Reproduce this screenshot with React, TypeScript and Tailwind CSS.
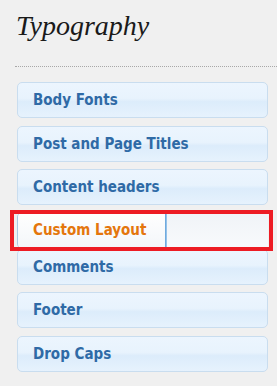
const items = ["Body Fonts", "Post and Page Titles", "Content headers"];
const after = ["Comments", "Footer", "Drop Caps"];

const Item = ({ label, className = "" }: { label: string; className?: string }) => (
  <div
    className={`flex h-[36px] items-center rounded-[5px] border border-[#c9ddef] bg-[linear-gradient(to_bottom,#ecf5fe_0%,#e8f3fd_45%,#dcecfb_55%,#e6f2fd_100%)] pl-[15px] text-[15px] font-bold text-[#2f6aa6] ${className}`}
  >
    {label}
  </div>
);

export default function App() {
  return (
    <div className="h-[386px] w-[277px] overflow-hidden bg-[#f0f0f0] font-['DejaVu_Sans_Condensed','DejaVu_Sans',sans-serif]">
      <div className="pl-[16px] pt-[8px]">
        <h1 className="font-['Liberation_Serif',serif] text-[28px] italic leading-[36px] text-[#1a1a1a]">
          Typography
        </h1>
      </div>
      <div className="ml-[15px] mt-[22px] border-t border-dotted border-[#a8a8a8]" />
      <div className="flex flex-col pl-[17px] pr-[9px] pt-[15px]">
        <Item label={items[0]} />
        <Item label={items[1]} className="mt-[8px]" />
        <Item label={items[2]} className="mt-[7px]" />
        <div className="relative mt-[7px]">
          <div className="flex h-[37px] overflow-hidden rounded-l-[5px]">
            <div className="flex w-[148px] items-center rounded-l-[5px] border-l border-[#a9c8e4] bg-[linear-gradient(to_bottom,#ffffff,#f3f6f9)] pl-[15px] text-[15px] font-bold text-[#e4760c]">
              Custom Layout
            </div>
            <div className="w-[2px] bg-[linear-gradient(to_right,#5d9fd8,#a8cdef)]" />
            <div className="flex-1 bg-[linear-gradient(to_bottom,#f0f3f7,#f8fafc)]" />
          </div>
          <div className="absolute bottom-[-2px] left-[-7px] right-[-5px] top-[-2px] border-[4px] border-[#ed1c24]" />
        </div>
        <Item label={after[0]} />
        <Item label={after[1]} className="mt-[7px]" />
        <Item label={after[2]} className="mt-[8px]" />
      </div>
    </div>
  );
}
